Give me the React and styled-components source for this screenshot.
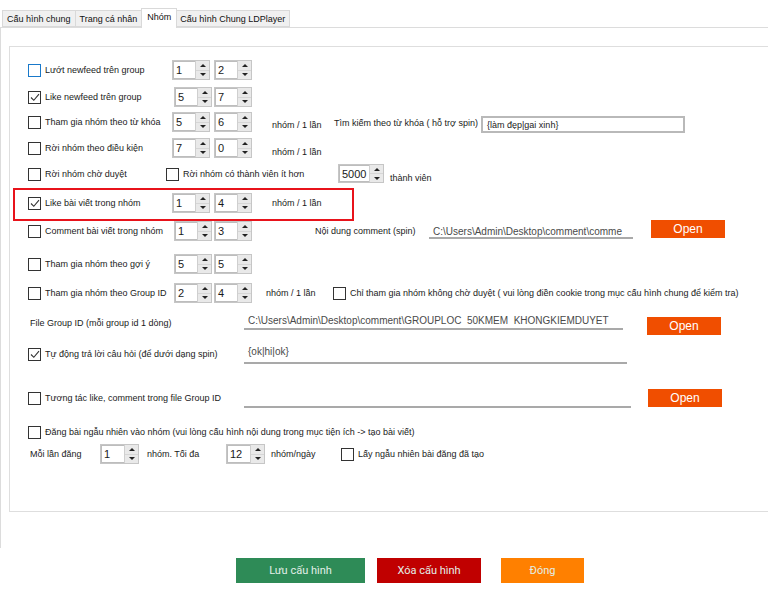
import React from 'react';
import styled, { createGlobalStyle } from 'styled-components';

const GlobalStyle = createGlobalStyle`
  html, body {
    margin: 0;
    padding: 0;
    background: #ffffff;
  }
  body {
    font-family: 'Liberation Sans', Arial, sans-serif;
    font-size: 9px;
    color: #1a1a1a;
  }
`;

const Window = styled.div`
  width: 768px;
  height: 594px;
  overflow: hidden;
  background: #fff;
  display: flex;
  flex-direction: column;
`;

// tab strip
const TabStrip = styled.div`
  display: flex;
  align-items: flex-end;
  height: 27px;
  flex-shrink: 0;
  padding-left: 2px;
  position: relative;
  z-index: 1;
`;

const Tab = styled.div`
  height: ${({ $active }) => ($active ? '20px' : '17px')};
  margin-bottom: ${({ $active }) => ($active ? '-1px' : '0')};
  padding: 0 ${({ $active }) => ($active ? '5px' : '4px')};
  margin-left: ${({ $active }) => ($active ? '-1px' : '0')};
  margin-right: ${({ $active }) => ($active ? '-1px' : '0')};
  display: flex;
  align-items: ${({ $active }) => ($active ? 'flex-start' : 'center')};
  padding-top: ${({ $active }) => ($active ? '3px' : '0')};
  box-sizing: border-box;
  background: ${({ $active }) => ($active ? '#ffffff' : '#f0f0f0')};
  border: 1px solid #d9d9d9;
  border-bottom: ${({ $active }) => ($active ? 'none' : '1px solid #d9d9d9')};
  border-left: ${({ $first, $active }) => ($first || $active ? '1px solid #d9d9d9' : 'none')};
  white-space: nowrap;
  font-size: 9px;
  color: #111;
  position: relative;
  z-index: ${({ $active }) => ($active ? 2 : 1)};
`;

const TabPage = styled.div`
  border-left: 1px solid #dcdcdc;
  border-top: 1px solid #dcdcdc;
  height: 521px;
  flex-shrink: 0;
  padding: 18px 0 0 8px;
  box-sizing: border-box;
`;

const GroupBox = styled.div`
  border: 1px solid #dedede;
  border-right: none;
  height: 466px;
  box-sizing: border-box;
  padding: 13px 0 0 18px;
`;

const Row = styled.div`
  display: flex;
  align-items: flex-start;
  height: ${({ $h }) => $h}px;
  position: relative;
`;

const Highlight = styled.div`
  position: absolute;
  left: -15px;
  top: -5px;
  width: 341px;
  height: 33px;
  box-sizing: border-box;
  border: 2px solid #e8131b;
  pointer-events: none;
`;

const CheckWrap = styled.label`
  display: flex;
  align-items: center;
  height: 20px;
  width: ${({ $w }) => ($w ? `${$w}px` : 'auto')};
  margin-left: ${({ $ml }) => $ml || 0}px;
  flex-shrink: 0;
  white-space: nowrap;
`;

const Box = styled.span`
  width: 13px;
  height: 13px;
  box-sizing: border-box;
  border: 1px solid ${({ $focus }) => ($focus ? '#1979ca' : '#333')};
  background: #fff;
  margin-right: 4px;
  display: flex;
  align-items: center;
  justify-content: center;
  flex-shrink: 0;
`;

const Text = styled.span`
  display: flex;
  align-items: center;
  height: 20px;
  width: ${({ $w }) => ($w ? `${$w}px` : 'auto')};
  margin-left: ${({ $ml }) => $ml || 0}px;
  margin-top: ${({ $mt }) => $mt || 0}px;
  flex-shrink: 0;
  white-space: nowrap;
`;

const SpinBox = styled.div`
  display: flex;
  width: ${({ $w }) => $w || 38}px;
  height: ${({ $h }) => $h || 20}px;
  box-sizing: border-box;
  border: 1px solid #c6c6c6;
  margin-left: ${({ $ml }) => $ml || 0}px;
  background: #fff;
  flex-shrink: 0;
`;

const SpinValue = styled.div`
  flex: 1;
  display: flex;
  align-items: center;
  padding-left: 2px;
  font-size: 11px;
  border: 1px solid #bdbdbd;
  border-right: none;
`;

const SpinBtns = styled.div`
  width: 13px;
  display: flex;
  flex-direction: column;
  background: #e9e9e9;
  border-left: 1px solid #cfcfcf;
`;

const SpinHalf = styled.div`
  flex: 1;
  display: flex;
  align-items: center;
  justify-content: center;
  border-bottom: ${({ $top }) => ($top ? '1px solid #d6d6d6' : 'none')};

  &::after {
    content: '';
    border-left: 3px solid transparent;
    border-right: 3px solid transparent;
    ${({ $top }) => ($top ? 'border-bottom: 3px solid #222;' : 'border-top: 3px solid #222;')}
  }
`;

const Input = styled.div`
  width: ${({ $w }) => $w}px;
  height: ${({ $h }) => $h || 18}px;
  margin-left: ${({ $ml }) => $ml || 0}px;
  margin-top: ${({ $mt }) => $mt || 0}px;
  box-sizing: border-box;
  display: flex;
  align-items: center;
  padding-left: 4px;
  white-space: nowrap;
  overflow: hidden;
  flex-shrink: 0;
  color: ${({ $underline }) => ($underline ? '#4a4a4a' : '#222')};
  border: ${({ $underline }) => ($underline ? 'none' : '2px solid #b9b9b9')};
  border-bottom: 2px solid ${({ $underline }) => ($underline ? '#a9a9a9' : '#b9b9b9')};
  font-size: ${({ $underline }) => ($underline ? '10px' : '9px')};
`;

const OpenButton = styled.div`
  width: 74px;
  height: 18px;
  margin-left: ${({ $ml }) => $ml || 0}px;
  margin-top: ${({ $mt }) => $mt || 0}px;
  background: #f04e00;
  color: #fff;
  display: flex;
  align-items: center;
  justify-content: center;
  font-size: 12px;
  flex-shrink: 0;
`;

const Footer = styled.div`
  display: flex;
  padding: 10px 0 0 236px;
  gap: 12px;
`;

const ActionButton = styled.div`
  width: ${({ $w }) => $w}px;
  height: 25px;
  margin-left: ${({ $ml }) => $ml || 0}px;
  background: ${({ $bg }) => $bg};
  color: #e3efe8;
  display: flex;
  align-items: center;
  justify-content: center;
  font-family: Roboto, 'Liberation Sans', sans-serif;
  font-size: 11px;
`;

const CheckMark = () => (
  <svg width="10" height="9" viewBox="0 0 10 9">
    <path d="M1 4.5 L3.8 7.3 L9 1.2" fill="none" stroke="#333" strokeWidth="1.1" />
  </svg>
);

function Check({ label, checked, focus, w, ml }) {
  return (
    <CheckWrap $w={w} $ml={ml}>
      <Box $focus={focus}>{checked && <CheckMark />}</Box>
      {label}
    </CheckWrap>
  );
}

function Spin({ value, w, h, ml }) {
  return (
    <SpinBox $w={w} $h={h} $ml={ml}>
      <SpinValue>{value}</SpinValue>
      <SpinBtns>
        <SpinHalf $top />
        <SpinHalf />
      </SpinBtns>
    </SpinBox>
  );
}

const tabs = ['Cấu hình chung', 'Trang cá nhân', 'Nhóm', 'Cấu hình Chung LDPlayer'];

export default function App() {
  return (
    <Window>
      <GlobalStyle />
      <TabStrip>
        {tabs.map((t, i) => (
          <Tab key={t} $active={i === 2} $first={i === 0}>
            {t}
          </Tab>
        ))}
      </TabStrip>
      <TabPage>
        <GroupBox>
          <Row $h={27}>
            <Check label="Lướt newfeed trên group" focus w={144} />
            <Spin value="1" />
            <Spin value="2" ml={4} />
          </Row>
          <Row $h={25}>
            <Check label="Like newfeed trên group" checked w={146} />
            <Spin value="5" />
            <Spin value="7" ml={2} />
          </Row>
          <Row $h={26}>
            <Check label="Tham gia nhóm theo từ khóa" w={144} />
            <Spin value="5" />
            <Spin value="6" ml={4} />
            <Text $ml={20} $w={62} $mt={3}>nhóm / 1 lần</Text>
            <Text $w={147} $mt={1}>Tìm kiếm theo từ khóa ( hỗ trợ spin)</Text>
            <Input $w={204} $h={17} $mt={4}>{'{làm đẹp|gai xinh}'}</Input>
          </Row>
          <Row $h={26}>
            <Check label="Rời nhóm theo điều kiện" w={144} />
            <Spin value="7" />
            <Spin value="0" ml={4} />
            <Text $ml={20} $mt={4}>nhóm / 1 lần</Text>
          </Row>
          <Row $h={29}>
            <Check label="Rời nhóm chờ duyệt" w={138} />
            <Check label="Rời nhóm có thành viên ít hơn" w={172} />
            <Spin value="5000" w={46} h={19} />
            <Text $ml={6} $mt={4}>thành viên</Text>
          </Row>
          <Row $h={28}>
            <Highlight />
            <Check label="Like bài viết trong nhóm" checked w={144} />
            <Spin value="1" />
            <Spin value="4" ml={4} />
            <Text $ml={20}>nhóm / 1 lần</Text>
          </Row>
          <Row $h={33}>
            <Check label="Comment bài viết trong nhóm" w={146} />
            <Spin value="1" />
            <Spin value="3" ml={2} />
            <Text $ml={63} $w={114}>Nội dung comment (spin)</Text>
            <Input $underline $w={204} $h={13} $mt={5}>
              C:\Users\Admin\Desktop\comment\comme
            </Input>
            <OpenButton $ml={18} $mt={-1}>Open</OpenButton>
          </Row>
          <Row $h={29}>
            <Check label="Tham gia nhóm theo gợi ý" w={146} />
            <Spin value="5" />
            <Spin value="5" ml={2} />
          </Row>
          <Row $h={29}>
            <Check label="Tham gia nhóm theo Group ID" w={146} />
            <Spin value="2" />
            <Spin value="4" ml={2} />
            <Text $ml={14} $w={67}>nhóm / 1 lần</Text>
            <Check label="Chỉ tham gia nhóm không chờ duyệt ( vui lòng điền cookie trong mục cấu hình chung để kiểm tra)" />
          </Row>
          <Row $h={32}>
            <Text $ml={2} $w={214} $mt={1}>File Group ID (mỗi group id 1 dòng)</Text>
            <Input $underline $w={379} $h={18}>
              C:\Users\Admin\Desktop\comment\GROUPLOC&nbsp;&nbsp;50KMEM&nbsp;&nbsp;KHONGKIEMDUYET
            </Input>
            <OpenButton $ml={24} $mt={5}>Open</OpenButton>
          </Row>
          <Row $h={44}>
            <Check label="Tự động trả lời câu hỏi (để dưới dạng spin)" checked w={216} />
            <Input $underline $w={383} $h={24} $mt={-4}>{'{ok|hi|ok}'}</Input>
          </Row>
          <Row $h={34}>
            <Check label="Tương tác like, comment trong file Group ID" w={216} />
            <Input $underline $w={387} $h={20} />
            <OpenButton $ml={17} $mt={1}>Open</OpenButton>
          </Row>
          <Row $h={22}>
            <Check label="Đăng bài ngẫu nhiên vào nhóm (vui lòng cấu hình nội dung trong mục tiện ích -> tạo bài viết)" />
          </Row>
          <Row $h={22}>
            <Text $ml={2} $w={70}>Mỗi lần đăng</Text>
            <Spin value="1" w={39} />
            <Text $ml={8} $w={79}>nhóm. Tối đa</Text>
            <Spin value="12" w={39} />
            <Text $ml={6} $w={70}>nhóm/ngày</Text>
            <Check label="Lấy ngẫu nhiên bài đăng đã tạo" />
          </Row>
        </GroupBox>
      </TabPage>
      <Footer>
        <ActionButton $w={129} $bg="#2e8b57">Lưu cấu hình</ActionButton>
        <ActionButton $w={104} $bg="#c00000">Xóa cấu hình</ActionButton>
        <ActionButton $w={83} $bg="#ff8000" $ml={8}>Đóng</ActionButton>
      </Footer>
    </Window>
  );
}
